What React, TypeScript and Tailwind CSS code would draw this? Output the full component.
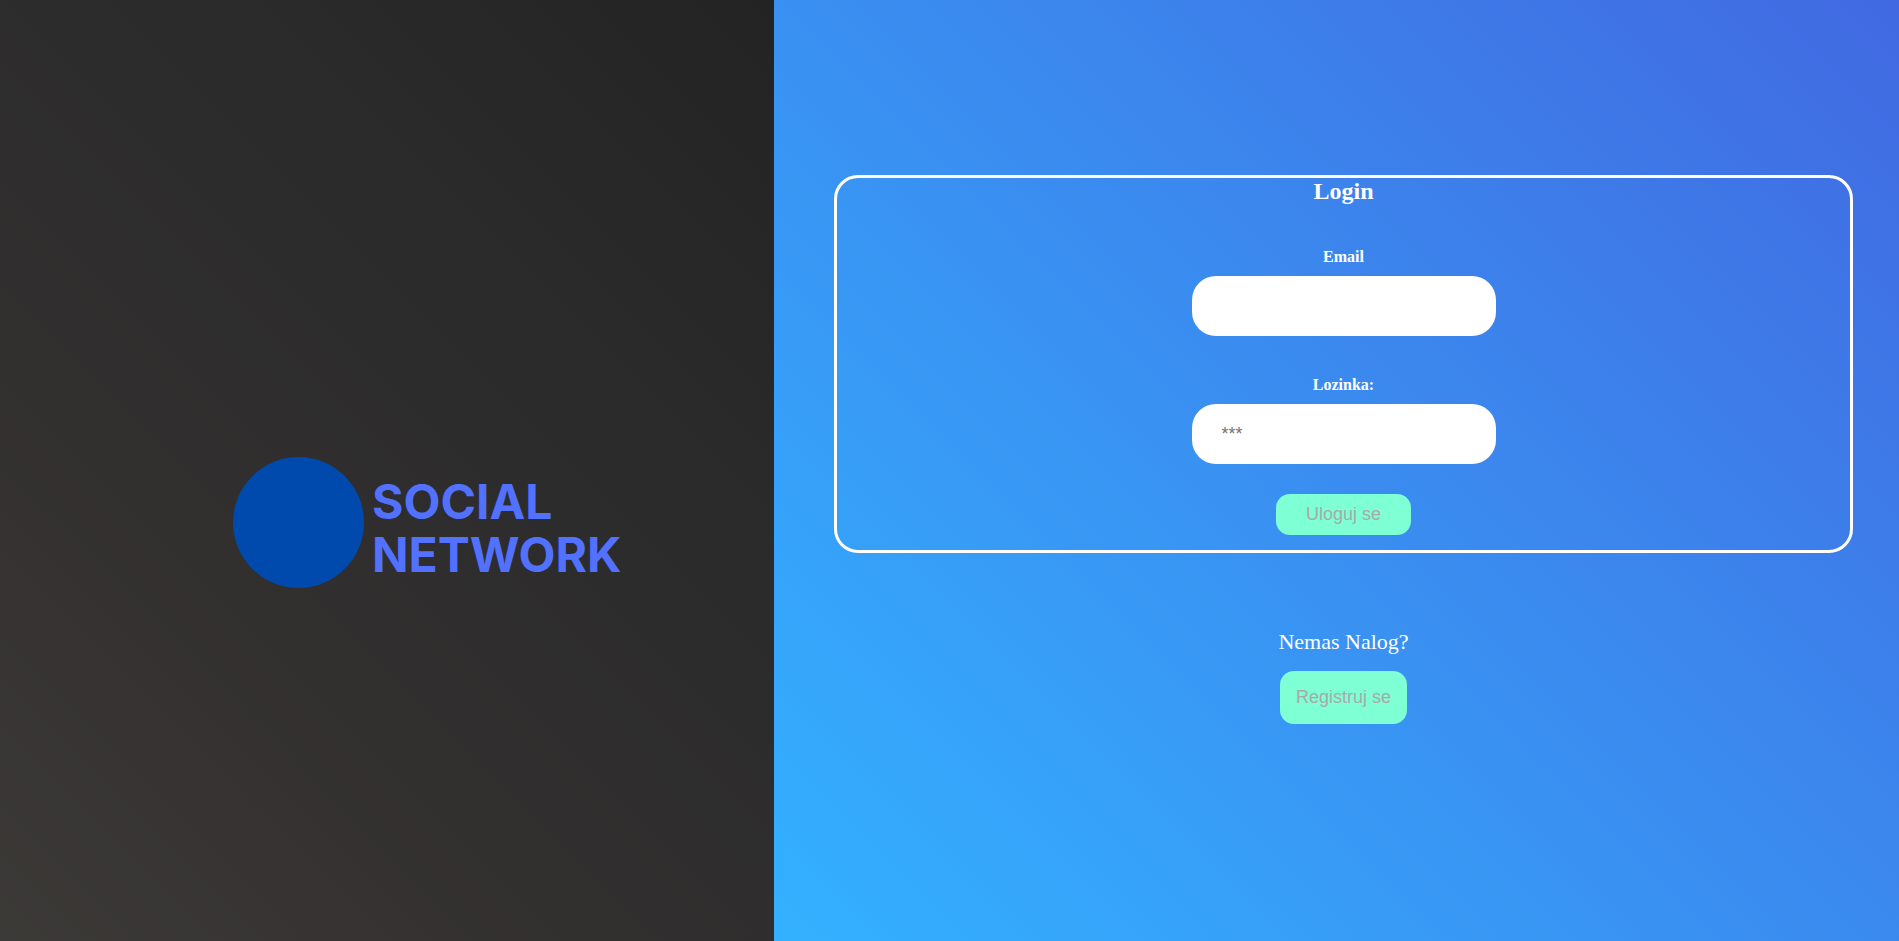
import { FormEvent } from "react";

function Logo() {
  return (
    <div className="flex items-center gap-2">
      <div className="size-[131px] shrink-0 rounded-full bg-[#004aad]" />
      <div className="flex flex-col pt-2.5 font-['Inter',sans-serif] text-[48px] leading-[53px] font-bold text-[#5271ff]">
        <span>SOCIAL</span>
        <span>NETWORK</span>
      </div>
    </div>
  );
}

type FieldProps = {
  id: string;
  label: string;
  type: string;
  placeholder?: string;
};

function Field({ id, label, type, placeholder }: FieldProps) {
  return (
    <div className="flex flex-col items-center gap-2.5">
      <label htmlFor={id} className="text-base leading-[18px] font-bold">
        {label}
      </label>
      <input
        id={id}
        type={type}
        placeholder={placeholder}
        className="h-[60px] w-[304px] rounded-3xl bg-white px-[30px] font-['Liberation_Sans',Arial,sans-serif] text-lg text-black placeholder:text-[#757575]"
      />
    </div>
  );
}

export default function App() {
  const onSubmit = (event: FormEvent) => event.preventDefault();

  return (
    <main className="grid min-h-screen grid-cols-[774fr_1125fr] font-['Liberation_Serif','Times_New_Roman',serif] text-white">
      <section className="flex items-center bg-linear-[45deg,#3c3a37,#322f2f,#2b2b2b,#232323] pt-[104px] pl-[233px]">
        <Logo />
      </section>

      <section className="flex flex-col items-center bg-linear-[45deg,#33b1ff,#4169e1] pt-[175px] pr-[46px] pl-[60px]">
        <form
          onSubmit={onSubmit}
          className="flex w-full flex-col items-center rounded-3xl border-3 border-white pb-[15px]"
        >
          <h1 className="text-2xl leading-[26px] font-bold">Login</h1>
          <div className="mt-11 flex flex-col gap-10">
            <Field id="email" label="Email" type="email" />
            <Field id="password" label="Lozinka:" type="password" placeholder="***" />
          </div>
          <button
            type="submit"
            className="mt-[30px] rounded-[14px] bg-[#7fffd4] px-[30px] py-2.5 font-['Liberation_Sans',Arial,sans-serif] text-lg leading-[21px] text-[#a9a9a9]"
          >
            Uloguj se
          </button>
        </form>

        <p className="mt-[76px] text-[22px] leading-[26px]">Nemas Nalog?</p>
        <button
          type="button"
          className="mt-4 rounded-[14px] bg-[#7fffd4] px-4 py-4 font-['Liberation_Sans',Arial,sans-serif] text-lg leading-[21px] text-[#a9a9a9]"
        >
          Registruj se
        </button>
      </section>
    </main>
  );
}
